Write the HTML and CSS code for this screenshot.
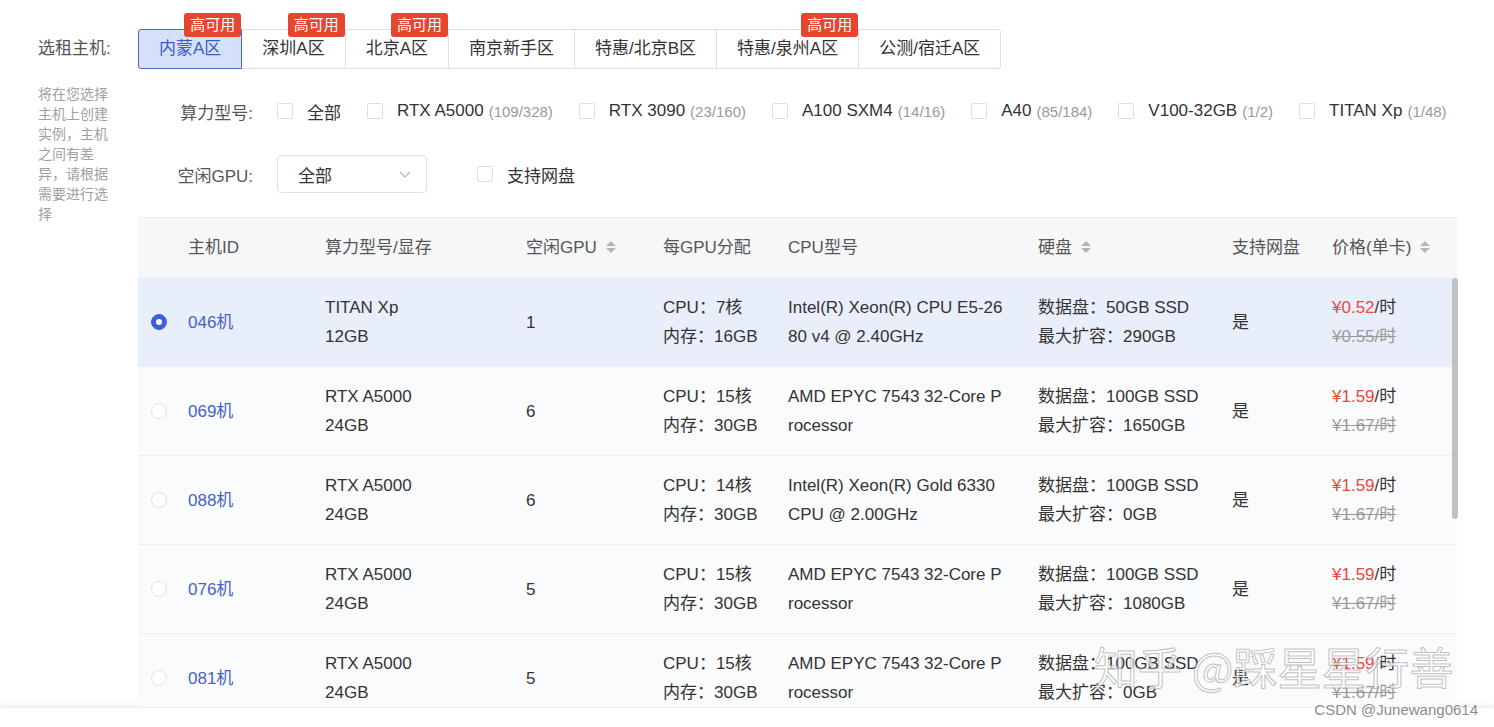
FILE: index.html
```html
<!DOCTYPE html>
<html>
<head>
  <meta charset="UTF-8">
  <title>选租主机</title>
  <link rel="stylesheet" href="styles.css">
</head>
<body>
  <div class="page">
    <div class="main">
      <div class="side">
        <div class="side-label">选租主机:</div>
        <div class="hint">将在您选择主机上创建实例，主机之间有差异，请根据需要进行选择</div>
      </div>

      <div class="content">
        <!-- region tabs -->
        <div class="tabs">
          <div class="tab active">内蒙A区<span class="badge">高可用</span></div>
          <div class="tab">深圳A区<span class="badge">高可用</span></div>
          <div class="tab">北京A区<span class="badge">高可用</span></div>
          <div class="tab">南京新手区</div>
          <div class="tab">特惠/北京B区</div>
          <div class="tab">特惠/泉州A区<span class="badge">高可用</span></div>
          <div class="tab">公测/宿迁A区</div>
        </div>

        <div class="filter filter-gpu">
          <div class="filter-label">算力型号:</div>
          <label class="check"><span class="box"></span>全部</label>
          <label class="check"><span class="box"></span>RTX A5000<span class="count">(109/328)</span></label>
          <label class="check"><span class="box"></span>RTX 3090<span class="count">(23/160)</span></label>
          <label class="check"><span class="box"></span>A100 SXM4<span class="count">(14/16)</span></label>
          <label class="check"><span class="box"></span>A40<span class="count">(85/184)</span></label>
          <label class="check"><span class="box"></span>V100-32GB<span class="count">(1/2)</span></label>
          <label class="check"><span class="box"></span>TITAN Xp<span class="count">(1/48)</span></label>
        </div>

        <div class="filter filter-free">
          <div class="filter-label">空闲GPU:</div>
          <div class="select">
            <span>全部</span>
            <svg class="chevron" width="12" height="7" viewBox="0 0 12 7"><polyline points="1,1 6,6 11,1" fill="none" stroke="#b4b4b4" stroke-width="1.2"/></svg>
          </div>
          <label class="check check-disk"><span class="box"></span>支持网盘</label>
        </div>

        <div class="table-wrap">
          <table class="hosts">
            <colgroup>
              <col style="width:40px"><col style="width:137px"><col style="width:201px"><col style="width:137px"><col style="width:125px"><col style="width:250px"><col style="width:194px"><col style="width:100px"><col style="width:135px">
            </colgroup>
            <thead>
              <tr>
                <th></th>
                <th>主机ID</th>
                <th>算力型号/显存</th>
                <th>空闲GPU<svg class="sort" width="12" height="14" viewBox="0 0 12 14"><polygon points="1,6 6,1 11,6" fill="#b5b5b5"/><polygon points="1,8 6,13 11,8" fill="#b5b5b5"/></svg></th>
                <th>每GPU分配</th>
                <th>CPU型号</th>
                <th>硬盘<svg class="sort" width="12" height="14" viewBox="0 0 12 14"><polygon points="1,6 6,1 11,6" fill="#b5b5b5"/><polygon points="1,8 6,13 11,8" fill="#b5b5b5"/></svg></th>
                <th>支持网盘</th>
                <th>价格(单卡)<svg class="sort" width="12" height="14" viewBox="0 0 12 14"><polygon points="1,6 6,1 11,6" fill="#b5b5b5"/><polygon points="1,8 6,13 11,8" fill="#b5b5b5"/></svg></th>
              </tr>
            </thead>
            <tbody>
              <tr class="selected">
                <td class="radio-cell"><span class="radio on"></span></td>
                <td class="host-id">046机</td>
                <td>TITAN Xp<br>12GB</td>
                <td>1</td>
                <td>CPU：7核<br>内存：16GB</td>
                <td class="cpu">Intel(R) Xeon(R) CPU E5-2680 v4 @ 2.40GHz</td>
                <td>数据盘：50GB SSD<br>最大扩容：290GB</td>
                <td>是</td>
                <td><span class="price">¥0.52</span>/时<br><span class="old">¥0.55/时</span></td>
              </tr>
              <tr>
                <td class="radio-cell"><span class="radio"></span></td>
                <td class="host-id">069机</td>
                <td>RTX A5000<br>24GB</td>
                <td>6</td>
                <td>CPU：15核<br>内存：30GB</td>
                <td class="cpu">AMD EPYC 7543 32-Core Processor</td>
                <td>数据盘：100GB SSD<br>最大扩容：1650GB</td>
                <td>是</td>
                <td><span class="price">¥1.59</span>/时<br><span class="old">¥1.67/时</span></td>
              </tr>
              <tr>
                <td class="radio-cell"><span class="radio"></span></td>
                <td class="host-id">088机</td>
                <td>RTX A5000<br>24GB</td>
                <td>6</td>
                <td>CPU：14核<br>内存：30GB</td>
                <td class="cpu">Intel(R) Xeon(R) Gold 6330 CPU @ 2.00GHz</td>
                <td>数据盘：100GB SSD<br>最大扩容：0GB</td>
                <td>是</td>
                <td><span class="price">¥1.59</span>/时<br><span class="old">¥1.67/时</span></td>
              </tr>
              <tr>
                <td class="radio-cell"><span class="radio"></span></td>
                <td class="host-id">076机</td>
                <td>RTX A5000<br>24GB</td>
                <td>5</td>
                <td>CPU：15核<br>内存：30GB</td>
                <td class="cpu">AMD EPYC 7543 32-Core Processor</td>
                <td>数据盘：100GB SSD<br>最大扩容：1080GB</td>
                <td>是</td>
                <td><span class="price">¥1.59</span>/时<br><span class="old">¥1.67/时</span></td>
              </tr>
              <tr>
                <td class="radio-cell"><span class="radio"></span></td>
                <td class="host-id">081机</td>
                <td>RTX A5000<br>24GB</td>
                <td>5</td>
                <td>CPU：15核<br>内存：30GB</td>
                <td class="cpu">AMD EPYC 7543 32-Core Processor</td>
                <td>数据盘：100GB SSD<br>最大扩容：0GB</td>
                <td>是</td>
                <td><span class="price">¥1.59</span>/时<br><span class="old">¥1.67/时</span></td>
              </tr>
            </tbody>
          </table>
          <div class="scrollbar"></div>
        </div>
      </div>
    </div>

    <div class="footer"></div>

    <div class="watermark">知乎 @踩星星行善</div>
    <div class="credit">CSDN @Junewang0614</div>
  </div>
</body>
</html>
```

FILE: styles.css
```css
body {
  margin: 0;
  font-family: "Liberation Sans", "Noto Sans CJK SC", sans-serif;
  font-size: 17px;
  color: #333;
  background-color: #fff;
  overflow: hidden;
}
.page {
  position: relative;
  height: 727px;
  display: flex;
  flex-direction: column;
}
.main {
  flex: 1;
  min-height: 0;
  overflow: hidden;
  display: grid;
  grid-template-columns: 100px 1319px;
  align-content: start;
  padding: 29px 0 0 38px;
}

/* left column */
.side-label {
  height: 40px;
  line-height: 40px;
  color: #555;
}
.hint {
  margin-top: 15px;
  width: 76px;
  font-size: 14px;
  line-height: 20px;
  color: #a0a0a0;
}

/* region tabs */
.tabs {
  display: flex;
}
.tab {
  position: relative;
  height: 40px;
  box-sizing: border-box;
  padding: 0 20px;
  line-height: 38px;
  border: 1px solid #dcdfe6;
  margin-left: -1px;
  background-color: #fff;
}
.tab:first-child {
  margin-left: 0;
  border-radius: 3px 0 0 3px;
}
.tab:last-child {
  border-radius: 0 3px 3px 0;
}
.tab.active {
  z-index: 1;
  background-color: #d6e0fb;
  border-color: #4a67c9;
  color: #3c5cc4;
}
.badge {
  position: absolute;
  top: -17px;
  right: 0;
  height: 24px;
  padding: 0 6px;
  line-height: 24px;
  font-size: 15px;
  color: #fff;
  background-color: #e6452f;
  border-radius: 3px;
  z-index: 2;
}

/* filters */
.filter {
  display: flex;
  align-items: center;
  height: 38px;
}
.filter-gpu {
  margin-top: 23px;
}
.filter-free {
  margin-top: 25px;
}
.filter-label {
  flex: none;
  width: 115px;
  margin-right: 24px;
  text-align: right;
  color: #555;
}
.check {
  flex: none;
  display: flex;
  align-items: center;
  margin-right: 26px;
  white-space: nowrap;
}
.check:last-child {
  margin-right: 0;
}
.box {
  width: 16px;
  height: 16px;
  box-sizing: border-box;
  border: 1px solid #dcdfe6;
  border-radius: 2px;
  margin-right: 14px;
  background-color: #fff;
}
.count {
  margin-left: 5px;
  font-size: 15px;
  color: #999;
}
.select {
  flex: none;
  width: 150px;
  height: 38px;
  box-sizing: border-box;
  border: 1px solid #dcdfe6;
  border-radius: 4px;
  display: flex;
  align-items: center;
  justify-content: space-between;
  padding: 0 15px 0 20px;
}
.check-disk {
  margin-left: 50px;
}

/* table */
.table-wrap {
  position: relative;
  margin-top: 24px;
}
.hosts {
  width: 1319px;
  border-collapse: collapse;
  table-layout: fixed;
}
.hosts th {
  height: 55px;
  padding: 0 10px 5px;
  text-align: left;
  font-weight: normal;
  color: #555;
  background-color: #f6f7f9;
  border-top: 1px solid #eceef2;
  white-space: nowrap;
}
.sort {
  margin-left: 8px;
  vertical-align: -1px;
}
.hosts td {
  padding: 15px 10px;
  line-height: 29px;
  vertical-align: middle;
  background-color: #fafbfc;
  border-bottom: 1px solid #ebeef5;
}
.hosts tr.selected td {
  background-color: #e9eefb;
  border-bottom-color: #e9eefb;
}
.hosts td.radio-cell {
  padding: 0 0 0 13px;
}
.hosts td.cpu {
  padding-right: 23px;
  word-break: break-all;
}
.host-id {
  color: #4762c3;
}
.radio {
  display: block;
  position: relative;
  width: 16px;
  height: 16px;
  box-sizing: border-box;
  border-radius: 50%;
  border: 1px solid #dfe2e8;
  background-color: #fff;
}
.radio.on {
  background-color: #3d5fd9;
  border-color: #3d5fd9;
}
.radio.on::after {
  content: "";
  position: absolute;
  left: 4px;
  top: 4px;
  width: 6px;
  height: 6px;
  border-radius: 50%;
  background-color: #fff;
}
.price {
  color: #e8473a;
}
.old {
  color: #999;
  text-decoration: line-through;
}
.scrollbar {
  position: absolute;
  top: 61px;
  right: -1px;
  width: 6px;
  height: 241px;
  border-radius: 3px;
  background-color: #c1c1c1;
}

.footer {
  flex: none;
  height: 19px;
  background-color: #fff;
  border-top: 1px solid #eee;
  box-shadow: 0 -2px 5px rgba(0, 0, 0, 0.07);
}

/* overlays */
.watermark {
  position: absolute;
  left: 1094px;
  top: 636px;
  font-family: "Noto Sans CJK SC", sans-serif;
  font-size: 44px;
  line-height: 60px;
  white-space: nowrap;
  color: rgba(255, 255, 255, 0.7);
  -webkit-text-stroke: 1px rgba(140, 140, 140, 0.55);
}
.credit {
  position: absolute;
  right: 16px;
  bottom: 9px;
  font-size: 15px;
  color: #8c8c8c;
}
```
